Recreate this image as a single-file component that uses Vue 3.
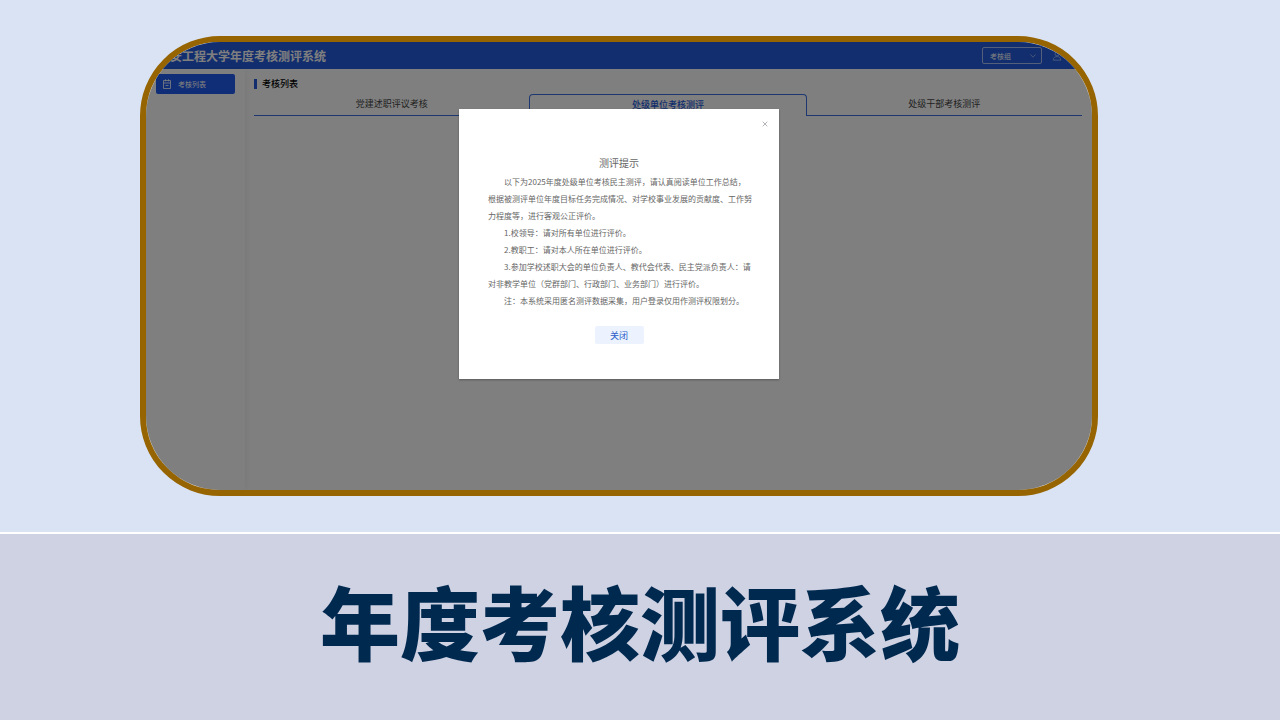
<script setup>
import { ref } from 'vue'

const tabs = ['党建述职评议考核', '处级单位考核测评', '处级干部考核测评']
const activeTab = ref(1)
const role = ref('考核组')
const open = ref(true)

const paragraphs = [
  ['以下为2025年度处级单位考核民主测评,请认真阅读单位工作总结,', '根据被测评单位年度目标任务完成情况、对学校事业发展的贡献度、工作努', '力程度等,进行客观公正评价。'],
  ['1.校领导:请对所有单位进行评价。'],
  ['2.教职工:请对本人所在单位进行评价。'],
  ['3.参加学校述职大会的单位负责人、教代会代表、民主党派负责人:请', '对非教学单位(党群部门、行政部门、业务部门)进行评价。'],
  ['注:本系统采用匿名测评数据采集,用户登录仅用作测评权限划分。']
].map((lines) => lines.map((l) => l.replaceAll(',', '\uFF0C').replaceAll(':', '\uFF1A').replaceAll('(', '\uFF08').replaceAll(')', '\uFF09')))
</script>

<template>
  <div class="slide">
    <section class="stage">
      <div class="frame">
        <header class="topbar">
          <h2 class="brand">西安工程大学年度考核测评系统</h2>
          <div class="account">
            <div class="role">
              <select v-model="role" aria-label="角色">
                <option>考核组</option>
              </select>
              <svg class="chevron" viewBox="0 0 8 8" aria-hidden="true"><path d="M1.5 2.5 4 5.2 6.5 2.5" /></svg>
            </div>
            <svg class="user" viewBox="0 0 12 12" aria-hidden="true">
              <circle cx="6" cy="3.5" r="2.4" />
              <path d="M1.5 11c0-3 2-4.3 4.5-4.3s4.5 1.3 4.5 4.3z" />
            </svg>
          </div>
        </header>
        <div class="body">
          <nav class="sidebar">
            <a href="#" class="menu-item">
              <svg viewBox="0 0 10 10" aria-hidden="true"><path d="M1.5 1.5h7v8h-7zM3.500 .3v2M6.500 .3v2M1.500 4h7M3.500 6.500h3" /></svg>
              <span>考核列表</span>
            </a>
          </nav>
          <main class="content">
            <h3 class="heading">考核列表</h3>
            <div class="tabs" role="tablist">
              <button
                v-for="(tab, i) in tabs"
                :key="tab"
                type="button"
                role="tab"
                :aria-selected="activeTab === i"
                class="tab"
                :class="{ active: activeTab === i }"
                @click="activeTab = i"
              >{{ tab }}</button>
            </div>
          </main>
        </div>
        <div v-if="open" class="mask">
          <div class="dialog" role="dialog" aria-labelledby="tip-title">
            <button type="button" class="close" aria-label="关闭窗口" @click="open = false">
              <svg viewBox="0 0 6 6" aria-hidden="true"><path d="M.7.7 5.3 5.3M5.3.7.7 5.3" /></svg>
            </button>
            <h4 id="tip-title">测评提示</h4>
            <p v-for="(lines, i) in paragraphs" :key="i">
              <template v-for="(line, j) in lines" :key="j"><br v-if="j" />{{ line }}</template>
            </p>
            <button type="button" class="confirm" @click="open = false">关闭</button>
          </div>
        </div>
      </div>
    </section>
    <footer class="caption">
      <h1>年度考核测评系统</h1>
    </footer>
  </div>
</template>

<style>
body {
  margin: 0;
}
</style>

<style scoped>
.slide {
  display: flex;
  flex-direction: column;
  min-height: 100vh;
  font-family: "Noto Sans CJK SC", sans-serif;
}
h1, h2, h3, h4, p {
  margin: 0;
}
button, select {
  font-family: inherit;
  padding: 0;
  cursor: pointer;
}
svg {
  fill: none;
  stroke: currentColor;
}
.stage {
  padding: 36px 182px 36px 140px;
  background: #dae3f3;
  border-bottom: 2px solid #fff;
}
.frame {
  position: relative;
  display: flex;
  flex-direction: column;
  box-sizing: border-box;
  min-height: 460px;
  border: 6px solid #966400;
  border-radius: 80px;
  overflow: hidden;
  background: #fff;
}
.topbar {
  display: flex;
  align-items: center;
  justify-content: space-between;
  height: 27px;
  padding: 0 30px 0 12px;
  background: #245cdc;
  color: #fff;
}
.brand {
  font-size: 12px;
  line-height: 16px;
  font-weight: 700;
}
.account {
  display: flex;
  align-items: center;
  gap: 10px;
}
.role {
  position: relative;
  display: flex;
}
.role select {
  appearance: none;
  width: 60px;
  height: 17px;
  padding-left: 7px;
  border: 1px solid #a9c0f4;
  border-radius: 2px;
  background: transparent;
  color: #fff;
  font-size: 7px;
}
.chevron {
  position: absolute;
  right: 5px;
  top: 5px;
  width: 8px;
  height: 8px;
  color: #a9c0f4;
  stroke-width: 0.8;
  pointer-events: none;
}
.user {
  width: 10px;
  height: 12px;
  color: #9fc0ff;
}
.body {
  flex: 1;
  display: flex;
}
.sidebar {
  width: 89px;
  padding: 5px 0 0 10px;
  box-shadow: 0 0 8px rgba(0, 0, 0, 0.08);
}
.menu-item {
  display: flex;
  align-items: center;
  gap: 6px;
  width: 73px;
  height: 20px;
  padding-left: 6px;
  border-radius: 2px;
  background: #205cf0;
  color: #fff;
  font-size: 7px;
  text-decoration: none;
}
.menu-item svg {
  width: 10px;
  height: 10px;
  stroke-width: 0.8;
}
.content {
  flex: 1;
  padding: 10px 10px 0 9px;
}
.heading {
  padding-left: 5px;
  border-left: 3px solid #245cdc;
  font-size: 9px;
  line-height: 10px;
  font-weight: 500;
  color: #000;
}
.tabs {
  display: flex;
  margin-top: 5px;
}
.tab {
  flex: 1;
  height: 22px;
  padding-bottom: 2px;
  border: 0 solid #3d6fe0;
  border-bottom-width: 1px;
  background: none;
  color: #444;
  font-size: 9px;
}
.tab.active {
  border-width: 1px 1px 0;
  border-radius: 4px 4px 0 0;
  color: #2459d8;
  font-weight: 500;
}
.mask {
  position: absolute;
  inset: 0;
  display: flex;
  align-items: flex-start;
  justify-content: center;
  padding-top: 67px;
  background: rgba(0, 0, 0, 0.5);
}
.dialog {
  position: relative;
  display: flex;
  flex-direction: column;
  box-sizing: border-box;
  width: 320px;
  padding: 46px 29px 35px;
  background: #fff;
  box-shadow: 0 1px 2px rgba(0, 0, 0, 0.3);
  color: #666;
}
.dialog h4 {
  margin-bottom: 2px;
  font-size: 10px;
  line-height: 16px;
  font-weight: 400;
  text-align: center;
}
.dialog p {
  font-size: 8px;
  line-height: 17px;
  text-indent: 16px;
  white-space: nowrap;
}
.close {
  position: absolute;
  top: 12px;
  right: 11px;
  display: flex;
  border: 0;
  background: none;
  color: #909399;
}
.close svg {
  width: 6px;
  height: 6px;
  stroke-width: 0.7;
}
.confirm {
  align-self: center;
  width: 49px;
  height: 18px;
  margin-top: 17px;
  border: 0;
  border-radius: 2px;
  background: #ecf3ff;
  color: #2a5cc8;
  font-size: 9px;
}
.caption {
  flex: 1;
  display: flex;
  align-items: center;
  justify-content: center;
  padding-bottom: 16px;
  background: #cfd2e3;
}
.caption h1 {
  font-size: 80px;
  line-height: 116px;
  font-weight: 900;
  color: #00294f;
}
</style>
